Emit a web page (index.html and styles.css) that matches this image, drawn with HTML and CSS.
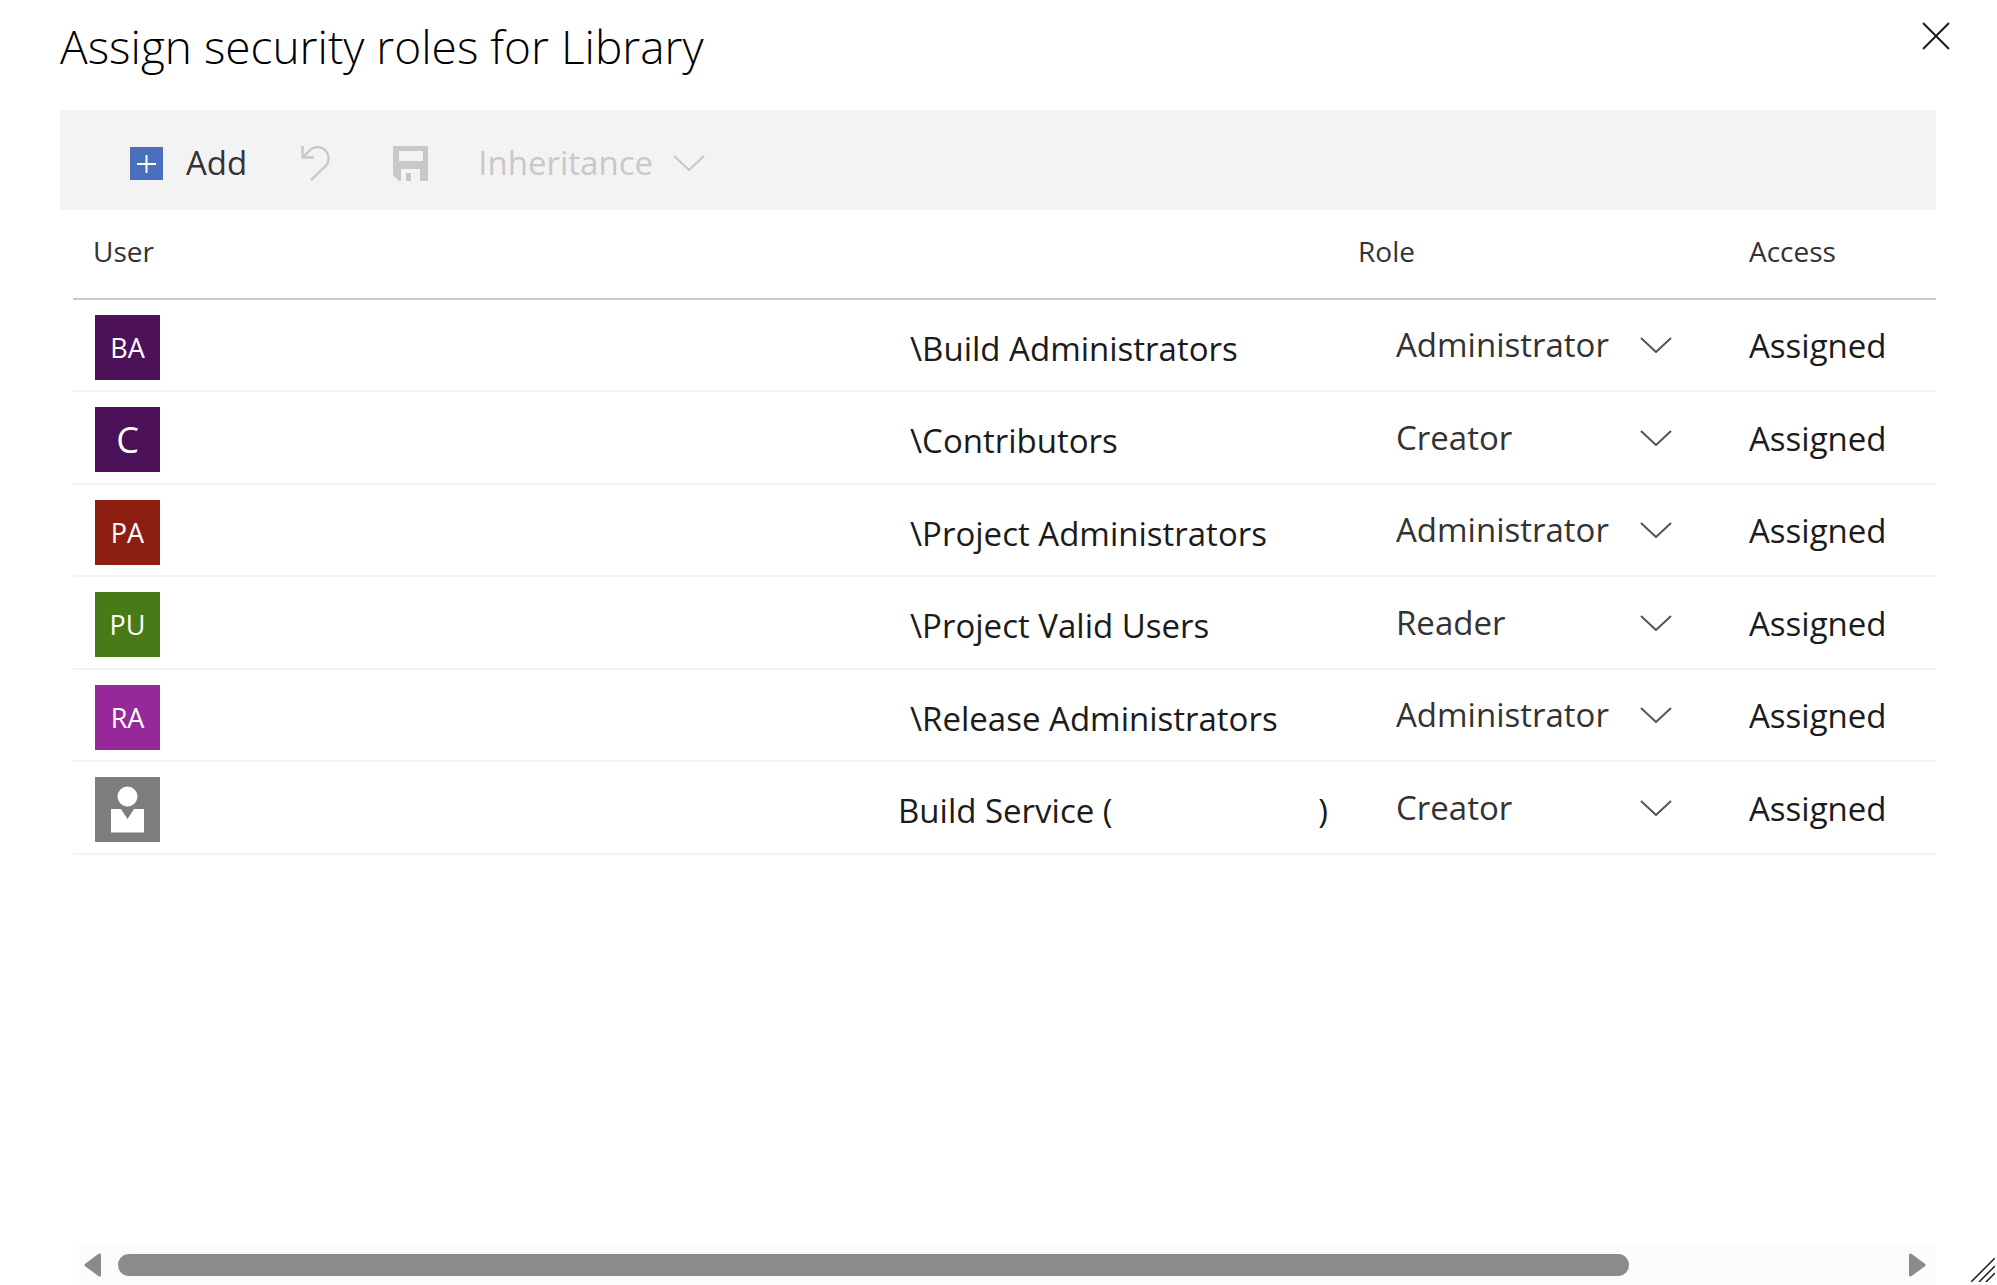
FILE: index.html
```html
<!DOCTYPE html>
<html lang="en">
<head>
<meta charset="utf-8">
<title>Assign security roles for Library</title>
<link rel="stylesheet" href="styles.css">
</head>
<body>
<svg width="0" height="0" class="sprite" aria-hidden="true">
  <symbol id="chevron" viewBox="0 0 32 16"><path d="M1 1 16 15 31 1" fill="none" stroke="currentColor" stroke-width="2"/></symbol>
</svg>
<main class="dialog">
  <header class="dialog-header">
    <h1 class="title">Assign security roles for Library</h1>
    <button class="close" type="button" aria-label="Close">
      <svg width="28" height="28" viewBox="0 0 28 28"><path d="M1 1 27 27M27 1 1 27" stroke="#1b1b1b" stroke-width="2" fill="none"/></svg>
    </button>
  </header>

  <div class="toolbar" role="toolbar">
    <button class="tool add" type="button">
      <svg width="33" height="33" viewBox="0 0 33 33"><path fill="#4870bc" d="M0 0h33v33H0z"/><path d="M7 17h19M16.500 8v18" stroke="#fff" stroke-width="2"/></svg>
      <span>Add</span>
    </button>
    <button class="tool undo" type="button" aria-label="Undo" disabled>
      <svg width="30" height="35" viewBox="0 0 30 35"><path d="M1.500 0v11.500H13M2 11 8.500 4.500C14-1 21 1 24.500 4.500S29 15 25 19.500L10 34.200" fill="none" stroke="currentColor" stroke-width="2.400"/></svg>
    </button>
    <button class="tool save" type="button" aria-label="Save" disabled>
      <svg width="35" height="35" viewBox="0 0 35 35"><path fill="currentColor" fill-rule="evenodd" d="M0 0h35v35h-8V23H8v12H6l-6-6zM6 5v10h24V5z"/><path fill="currentColor" d="M13 27h5v8h-5z"/></svg>
    </button>
    <button class="tool inheritance" type="button" disabled>
      <span>Inheritance</span>
      <svg width="32" height="16"><use href="#chevron"/></svg>
    </button>
  </div>

  <div class="table-wrap">
    <table class="roles">
      <thead>
        <tr><th class="col-user" scope="col">User</th><th class="col-role" scope="col">Role</th><th class="col-access" scope="col">Access</th></tr>
      </thead>
      <tbody>
        <tr>
          <td class="user-cell"><div class="user"><span class="avatar purple">BA</span><span class="name">\Build Administrators</span></div></td>
          <td><div class="picker"><select aria-label="Role for Build Administrators"><option>Administrator</option></select><svg width="32" height="16"><use href="#chevron"/></svg></div></td>
          <td class="access">Assigned</td>
        </tr>
        <tr>
          <td class="user-cell"><div class="user"><span class="avatar purple single">C</span><span class="name">\Contributors</span></div></td>
          <td><div class="picker"><select aria-label="Role for Contributors"><option>Creator</option></select><svg width="32" height="16"><use href="#chevron"/></svg></div></td>
          <td class="access">Assigned</td>
        </tr>
        <tr>
          <td class="user-cell"><div class="user"><span class="avatar red">PA</span><span class="name">\Project Administrators</span></div></td>
          <td><div class="picker"><select aria-label="Role for Project Administrators"><option>Administrator</option></select><svg width="32" height="16"><use href="#chevron"/></svg></div></td>
          <td class="access">Assigned</td>
        </tr>
        <tr>
          <td class="user-cell"><div class="user"><span class="avatar green">PU</span><span class="name">\Project Valid Users</span></div></td>
          <td><div class="picker"><select aria-label="Role for Project Valid Users"><option>Reader</option></select><svg width="32" height="16"><use href="#chevron"/></svg></div></td>
          <td class="access">Assigned</td>
        </tr>
        <tr>
          <td class="user-cell"><div class="user"><span class="avatar magenta">RA</span><span class="name">\Release Administrators</span></div></td>
          <td><div class="picker"><select aria-label="Role for Release Administrators"><option>Administrator</option></select><svg width="32" height="16"><use href="#chevron"/></svg></div></td>
          <td class="access">Assigned</td>
        </tr>
        <tr>
          <td class="user-cell"><div class="user"><span class="avatar gray"><svg width="65" height="65" viewBox="0 0 65 65"><circle cx="32.500" cy="19.500" r="10" fill="#fff"/><path fill="#fff" d="M16 32h10l6.500 10L39 32h10v23.500H16z"/></svg></span><span class="name service"><span>Build Service (</span><span>)</span></span></div></td>
          <td><div class="picker"><select aria-label="Role for Build Service"><option>Creator</option></select><svg width="32" height="16"><use href="#chevron"/></svg></div></td>
          <td class="access">Assigned</td>
        </tr>
      </tbody>
    </table>
  </div>

  <div class="scrollbar">
    <button class="arrow" type="button" aria-label="Scroll left"><svg width="18" height="24" viewBox="0 0 18 24"><path d="M15.500 2v20L2 12z" fill="#8b8b8b" stroke="#8b8b8b" stroke-width="3" stroke-linejoin="round"/></svg></button>
    <div class="track"><div class="thumb"></div></div>
    <button class="arrow" type="button" aria-label="Scroll right"><svg width="18" height="24" viewBox="0 0 18 24"><path d="M2.500 2v20L16 12z" fill="#8b8b8b" stroke="#8b8b8b" stroke-width="3" stroke-linejoin="round"/></svg></button>
  </div>
  <svg class="grip" width="24" height="24" viewBox="0 0 24 24"><path d="M0 24 24 0M8 24 24 8M15 24 24 15" stroke="#1b1b1b" stroke-width="1.500" fill="none"/></svg>
</main>
</body>
</html>
```
FILE: styles.css
```css
* {
  box-sizing: border-box;
}

body {
  margin: 0;
  background: #fff;
  color: #1b1b1b;
  font-family: "Open Sans", "Noto Sans", sans-serif;
  font-size: 33px;
  line-height: 48px;
}

button,
select {
  padding: 0;
  border: 0;
  background: none;
  color: inherit;
  font: inherit;
}

svg {
  display: block;
  flex: none;
}

.sprite {
  position: absolute;
}

.dialog {
  position: relative;
  display: flex;
  flex-direction: column;
  min-height: 100vh;
  padding: 0 61px 0 60px;
}

.dialog-header {
  display: flex;
  justify-content: space-between;
  align-items: flex-start;
  height: 110px;
  padding-top: 12px;
}

.title {
  margin: 0;
  color: #000;
  font-size: 46px;
  font-weight: 300;
  line-height: 68px;
}

.close {
  margin: 10px -14px 0 0;
}

.toolbar {
  display: flex;
  align-items: center;
  height: 100px;
  padding: 6px 70px 0;
  background: #f3f3f3;
  color: #333;
}

.tool {
  display: flex;
  align-items: center;
}

.tool:disabled {
  color: #c8c8c8;
}

.add {
  gap: 23px;
  margin-right: 54px;
}

.undo {
  margin-right: 62px;
}

.save {
  margin-right: 50px;
}

.inheritance {
  gap: 20px;
}

.table-wrap {
  flex: 1;
  padding-left: 13px;
}

.roles {
  width: 100%;
  border-collapse: separate;
  border-spacing: 0;
  table-layout: fixed;
}

.roles th {
  height: 90px;
  padding: 0 0 6px;
  border-bottom: 2px solid #c8c8c8;
  color: #333;
  font-size: 28px;
  font-weight: 400;
  text-align: left;
}

.roles .col-user {
  padding-left: 20px;
}

.col-role {
  width: 391px;
}

.col-access {
  width: 187px;
}

.roles td {
  height: 92px;
  padding: 0;
  border-bottom: 2px solid #f3f3f3;
}

.roles tr:nth-child(even) td {
  height: 93px;
}

.roles .user-cell {
  padding: 15px 30px 0 22px;
  vertical-align: top;
}

.roles .access {
  padding-top: 2px;
}

.user {
  display: flex;
  align-items: center;
}

.avatar {
  flex: none;
  width: 65px;
  height: 65px;
  margin-right: auto;
  color: #fff;
  font-size: 27px;
  line-height: 65px;
  text-align: center;
}

.single {
  font-size: 36px;
}

.purple {
  background: #4c1158;
}

.red {
  background: #8c1e12;
}

.green {
  background: #487a17;
}

.magenta {
  background: #962899;
}

.gray {
  background: #7d7d7d;
}

.name {
  width: 418px;
  padding-top: 3px;
  white-space: nowrap;
}

.service {
  display: flex;
  justify-content: space-between;
  width: 430px;
}

.picker {
  display: grid;
  grid-template-columns: 244px 32px;
  align-items: center;
  padding-left: 38px;
  color: #333;
}

.picker select {
  grid-area: 1 / 1 / 2 / 3;
  height: 48px;
  appearance: none;
}

.picker svg {
  grid-area: 1 / 2;
  color: #555;
  pointer-events: none;
}

.scrollbar {
  display: flex;
  align-items: center;
  height: 39px;
  margin-left: 13px;
  padding: 0 10px 1px 11px;
  background: #fcfcfc;
}

.track {
  flex: 1;
  margin: 0 12px 0 16px;
}

.thumb {
  width: 85%;
  height: 22px;
  border-radius: 11px;
  background: #8b8b8b;
}

.grip {
  position: absolute;
  right: 2px;
  bottom: 3px;
}
```
